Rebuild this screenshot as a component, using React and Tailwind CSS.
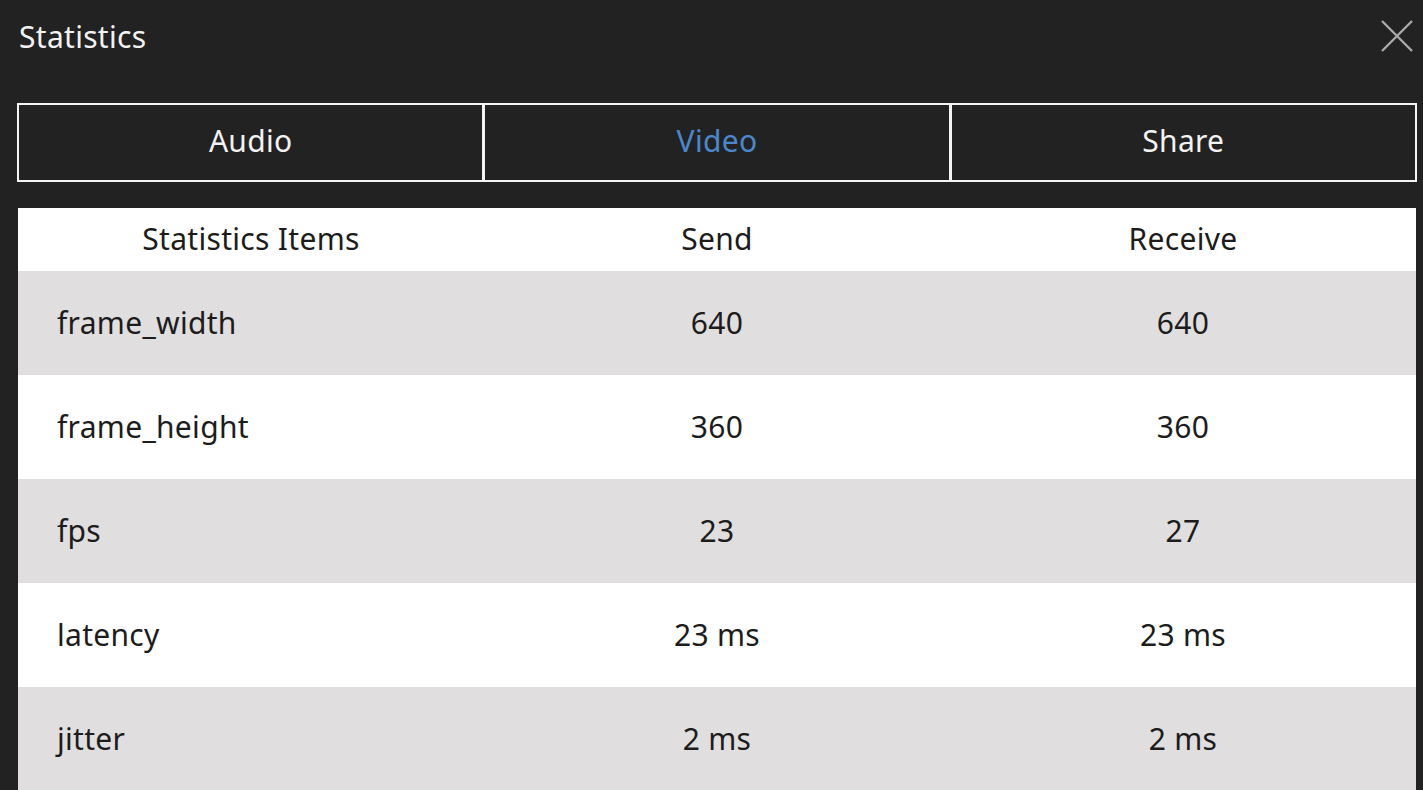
import React, { useState } from 'react';

const rows = [
  { name: 'frame_width', send: '640', receive: '640' },
  { name: 'frame_height', send: '360', receive: '360' },
  { name: 'fps', send: '23', receive: '27' },
  { name: 'latency', send: '23 ms', receive: '23 ms' },
  { name: 'jitter', send: '2 ms', receive: '2 ms' },
];

const tabs = ['Audio', 'Video', 'Share'];

export default function App() {
  const [tab, setTab] = useState('Video');

  return (
    <div
      className="w-[1423px] h-[790px] overflow-hidden bg-[#222222] flex flex-col"
      style={{ fontFamily: '"Noto Sans", "Open Sans", sans-serif' }}
    >
      {/* Title bar */}
      <div className="h-[78px] flex items-center justify-between pl-[19px] pr-[9px] shrink-0">
        <span className="text-[30px] tracking-[0.3px] text-[#f2f2f2] leading-none -mt-[4px]">Statistics</span>
        <button className="w-[34px] h-[34px] flex items-center justify-center -mt-[6px]">
          <svg width="32" height="32" viewBox="0 0 32 32">
            <path d="M1 1 L31 31 M31 1 L1 31" stroke="#a8a8a8" strokeWidth="2.4" fill="none" />
          </svg>
        </button>
      </div>

      {/* Tabs */}
      <div className="ml-[17px] mr-[6px] h-[79px] flex border-[2.5px] border-[#f4f4f4] shrink-0 mt-[25px]">
        {tabs.map((t, i) => (
          <button
            key={t}
            onClick={() => setTab(t)}
            className={
              'flex-1 flex items-center justify-center text-[30px] tracking-[0.3px] leading-none ' +
              (i > 0 ? 'border-l-[3px] border-[#f4f4f4] ' : '') +
              (tab === t ? 'text-[#4b87cc]' : 'text-[#f2f2f2]')
            }
          >
            <span className="-mt-[4px]">{t}</span>
          </button>
        ))}
      </div>

      {/* Table */}
      <div className="ml-[18px] mr-[7px] mt-[26px] flex-1 bg-white text-[#1c1c1c] text-[30px] tracking-[0.3px]">
        <div className="h-[63px] grid grid-cols-3 items-center text-center">
          <span className="-mt-[2px]">Statistics Items</span>
          <span className="-mt-[2px]">Send</span>
          <span className="-mt-[2px]">Receive</span>
        </div>
        {rows.map((r, i) => (
          <div
            key={r.name}
            className={
              'h-[104px] grid grid-cols-3 items-center ' +
              (i % 2 === 0 ? 'bg-[#e1dedf]' : 'bg-white')
            }
          >
            <span className="pl-[39px] -mt-[2px]">{r.name}</span>
            <span className="text-center -mt-[2px]">{r.send}</span>
            <span className="text-center -mt-[2px]">{r.receive}</span>
          </div>
        ))}
      </div>
    </div>
  );
}
